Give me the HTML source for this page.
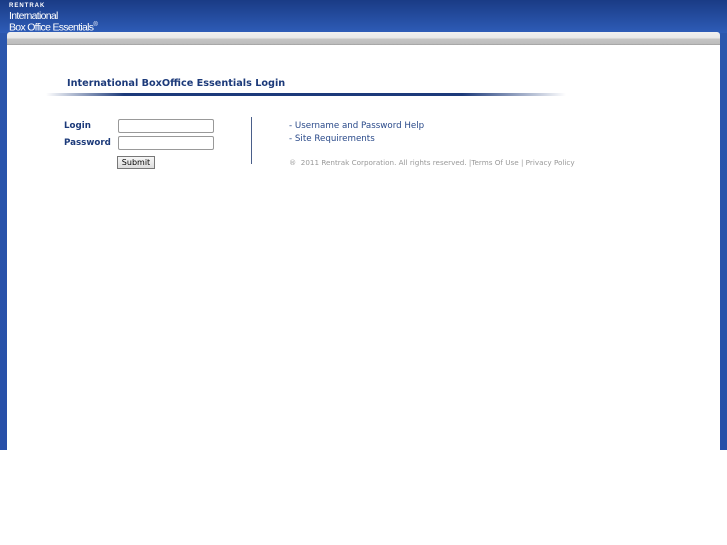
<!DOCTYPE html>
<html><head><style>
body{margin:0;width:727px;height:545px;background:#fff;position:relative;overflow:hidden;font-family:"DejaVu Sans","Liberation Sans",sans-serif}
#frame{position:absolute;left:0;top:0;width:727px;height:450px;background:linear-gradient(180deg,#1c3f8c 0%,#2a56ad 6%,#2850a8 100%)}
#hdr{position:absolute;left:0;top:0;width:727px;height:33px;background:linear-gradient(180deg,#1a3b85 0%,#2e5cb8 100%)}
#bar{position:absolute;left:7px;top:32px;width:713px;height:13px;background:linear-gradient(180deg,#f0f0f0 0%,#e8e8e8 45%,#c4c4c4 55%,#bdbdbd 90%,#9a9a9a 100%);border-radius:3px 3px 0 0}
#content{position:absolute;left:7px;top:45px;width:713px;height:405px;background:#fff}
.logo{position:absolute;color:#fff;font-family:"Liberation Sans",sans-serif}
.t{position:absolute;color:#1c3a7a;white-space:nowrap}
input.f{position:absolute;width:96px;height:14px;border:1px solid #999;border-radius:2px;box-sizing:border-box;background:#fff;padding:0}
</style></head><body>
<div id="frame"></div>
<div id="hdr"></div>
<div class="logo" style="left:9px;top:3px;font-size:6px;font-weight:bold;letter-spacing:1px">RENTRAK</div>
<div class="logo" style="left:9px;top:12px;font-size:10.5px;letter-spacing:-0.7px;line-height:9px">International<br>Box Office Essentials<sup style="font-size:6px">®</sup></div>
<div id="bar"></div>
<div id="content"></div>
<div class="t" style="left:67px;top:78px;font-size:9.7px;font-weight:bold">International BoxOffice Essentials Login</div>
<div style="position:absolute;left:46px;top:93px;width:520px;height:3px;background:linear-gradient(90deg,rgba(28,58,122,0) 0%,#1c3a7a 15%,#1c3a7a 80%,rgba(28,58,122,0) 100%)"></div>
<div class="t" style="left:64px;top:121px;font-size:8.7px;font-weight:bold">Login</div>
<div class="t" style="left:64px;top:138px;font-size:8.7px;font-weight:bold">Password</div>
<input class="f" style="left:118px;top:119px">
<input class="f" style="left:118px;top:136px">
<div style="position:absolute;left:117px;top:156px;width:36px;height:11px;border:1px solid #777;background:linear-gradient(#f6f6f6,#ddd);font-size:8px;text-align:center;line-height:11px;color:#000">Submit</div>
<div style="position:absolute;left:251px;top:117px;width:1px;height:47px;background:#4a5f8a"></div>
<div class="t" style="left:289px;top:121px;font-size:8.7px;color:#2a4a8a">- Username and Password Help</div>
<div class="t" style="left:289px;top:134px;font-size:8.7px;color:#2a4a8a">- Site Requirements</div>
<div class="t" style="left:289px;top:158px;font-size:7.2px;color:#999">®&nbsp; 2011 Rentrak Corporation. All rights reserved. |Terms Of Use | Privacy Policy</div>
</body></html>
